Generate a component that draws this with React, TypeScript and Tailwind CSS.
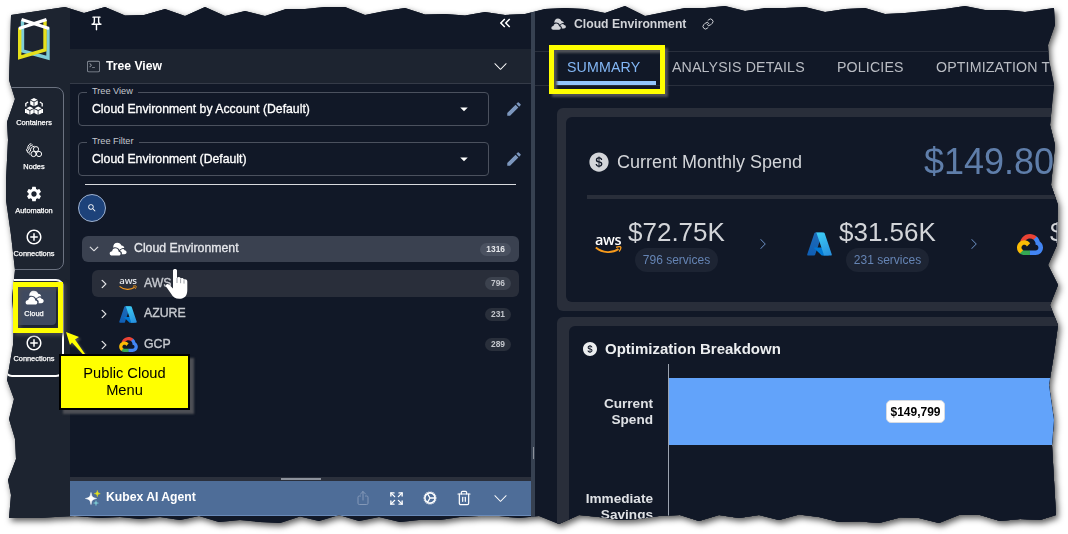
import React from 'react';
import { MdAddCircleOutline, MdArrowDropDown, MdEdit, MdKeyboardDoubleArrowLeft, MdOutlinePushPin, MdSearch, MdSettings } from 'react-icons/md';
import { BsChevronDown, BsChevronRight, BsTerminal } from 'react-icons/bs';
import { AiFillDollarCircle } from 'react-icons/ai';
import { IoShareOutline } from 'react-icons/io5';
import { HiOutlineCog } from 'react-icons/hi2';
import { Expand, Link, Trash2 } from 'lucide-react';

// Outline of the torn page edge, clockwise from the top left corner
const TORN_EDGE: [number, number][] = [
  [11, 15], [65, 7], [84, 13], [105, 7], [125, 15.5], [144, 15], [165, 9], [185, 16], [205, 7], [225, 16],
  [245, 11], [265, 16], [286, 9], [305, 9], [325, 7], [345, 7], [365, 15], [385, 11], [405, 8], [425, 14.5],
  [445, 14], [465, 15.5], [485, 12], [505, 15], [525, 14], [545, 9], [565, 8], [585, 9], [605, 13], [625, 6],
  [645, 16], [665, 12], [685, 8], [705, 8], [725, 6], [745, 11], [765, 8], [785, 8], [805, 7], [825, 12],
  [845, 9], [865, 8], [885, 14], [905, 13], [925, 11], [945, 9], [965, 6], [985, 10], [1005, 10], [1025, 12],
  [1054, 8], [1055, 25], [1048, 45], [1049, 60], [1054, 85], [1052, 105], [1050, 125], [1055, 145], [1051, 185],
  [1058, 205], [1057, 245], [1048, 265], [1058, 285], [1050, 305], [1058, 325], [1054, 354], [1049, 385],
  [1054, 420], [1052, 445], [1056, 515], [1040, 520], [1020, 519], [1000, 521], [980, 515], [959, 515],
  [939, 523], [919, 518], [900, 517.5], [879, 523], [860, 521.5], [839, 522], [819, 517], [799, 514.5],
  [779, 520], [759, 515], [739, 518], [719, 515], [699, 521], [680, 515], [659, 516], [639, 519], [619, 520],
  [599, 517], [579, 515], [559, 524], [539, 516], [519, 518], [499, 516], [479, 516], [460, 517], [440, 520],
  [419, 520], [400, 522], [379, 517], [359, 521], [339, 515], [319, 521], [300, 516.5], [280, 523], [260, 522],
  [240, 520], [219, 522], [199, 516], [180, 520], [160, 517], [140, 519], [120, 517], [100, 518], [75, 516],
  [55, 517], [40, 518], [9, 518], [11, 495], [8, 480], [16, 459], [15, 439], [9, 419], [14, 399], [7, 380],
  [13, 345], [14, 320], [12, 298], [15, 270], [11, 235], [6, 200], [6, 180], [8, 140], [7, 122], [15, 99],
  [9, 80], [10, 50],
];

const tornClip = `polygon(${TORN_EDGE.map(([x, y]) => `${x}px ${y}px`).join(', ')})`;

type IconProps = { className?: string };

function Logo() {
  return (
    <svg viewBox="0 0 34 44" className="h-[44px] w-[34px]" fill="none">
      <path d="M5.500 4V34L31 41V11" stroke="#7fcdd6" strokeWidth="3.400" />
      <path d="M28 4V33L2.700 40.500V11" stroke="#e6e01c" strokeWidth="3.400" />
      <path d="M4.500 2.500L32 11.500M29.500 2.500L2 11.500" stroke="#fff" strokeWidth="3.400" />
    </svg>
  );
}

function CloudsIcon({ className }: IconProps) {
  return (
    <svg viewBox="0 0 20 16" className={className} fill="currentColor">
      <path d="M4.500 6.500C4.300 3 6.300.8 9.300.8c2.300 0 4 1.300 4.600 3.200 1.900.1 3.100 1.200 3.300 2.900-1.600-.4-3 .1-3.900 1.100-.8.1-1.300.5-1.600 1C10.500 6.600 7.300 5.300 4.500 6.500z" />
      <path d="M14.300 14h2.900c1.600 0 2.600-1 2.600-2.300 0-1.300-.9-2.300-2.300-2.400-.7-1.500-2.700-2-4-.5-.4 0-.8.3-1 .8.2.3.300.6.4.9 1.400.6 2 2 1.400 3.500z" />
      <path d="M2.900 15.500h7.800c1.400 0 2.300-.9 2.300-2.200s-.9-2.100-2.200-2.200C10.500 8.500 8.900 7.200 7 7.200c-2 0-3.500 1.400-3.700 3.500-1.700 0-2.800 1.100-2.800 2.500 0 1.300 1 2.300 2.400 2.300z" />
    </svg>
  );
}

function Cube({ x, y }: { x: number; y: number }) {
  return (
    <g transform={`translate(${x} ${y})`} fill="currentColor">
      <path d="M4 0l3.500 1.800L4 3.600.5 1.800z" />
      <path d="M.2 2.600l3.400 1.700v4L.2 6.500zM7.800 2.600L4.400 4.300v4l3.400-1.800z" />
    </g>
  );
}

function ContainersIcon() {
  return (
    <svg viewBox="0 0 18 18" className="h-[18px] w-[18px]">
      <Cube x={5} y={0} />
      <Cube x={.9} y={8.500} />
      <Cube x={9.100} y={8.500} />
      <path d="M.8 8.500V5.500l2.400-1.500M17.200 8.500V5.500L14.800 4M.6 11v4M17.400 11v4" stroke="currentColor" strokeWidth="1.300" fill="none" />
    </svg>
  );
}

function NodesIcon() {
  return (
    <svg viewBox="0 0 17 15" className="h-[15px] w-[17px]" fill="none" stroke="currentColor" strokeWidth="1">
      <circle cx="10" cy="6.200" r="2.600" />
      <circle cx="7.500" cy="11" r="2.600" />
      <circle cx="13" cy="11" r="2.600" />
      <path d="M3.600 11.500C2.500 10 3 8.500 4.500 8 4.300 5.500 5.500 3.500 8.500 3.200M2.200 10C1 8.500 1.500 7 3 6.300 3 4 4 2.200 6.800 1.900M.9 8.300C.2 7 .6 5.800 1.800 5 1.800 2.700 3 .9 5.300.7" />
    </svg>
  );
}

function AwsIcon({ large }: { large?: boolean }) {
  return (
    <span className={large ? 'flex w-[27px] flex-col items-center text-white' : 'flex w-[18px] flex-col items-center text-gray-200'}>
      <span className={large ? 'font-["Open_Sans"] text-[14.500px] font-semibold leading-[12px] tracking-[-0.4px]' : 'font-["Open_Sans"] text-[9.600px] font-semibold leading-[8px] tracking-[-0.2px]'}>aws</span>
      <svg viewBox="0 0 27 8" className={large ? 'h-[8px] w-[27px]' : 'h-[6px] w-[18px]'} fill="none" stroke="#f79a1c">
        <path d="M.8 1.500C7.500 7.300 17.500 7.300 23.500 3" strokeWidth="1.800" />
        <path d="M21 1.300c2-.7 4.500-.8 4.800-.1.300.8-.5 2.800-1.700 4.300" strokeWidth="1.300" />
      </svg>
    </span>
  );
}

function AzureIcon({ className }: IconProps) {
  return (
    <svg viewBox="3 5 90 86" className={className}>
      <defs>
        <linearGradient id="azDark" x1="0.6" y1="0" x2="0.3" y2="1">
          <stop offset="0" stopColor="#1f6bb8" />
          <stop offset="1" stopColor="#0f5fb5" />
        </linearGradient>
        <linearGradient id="azLight" x1="0.3" y1="0" x2="0.7" y2="1">
          <stop offset="0" stopColor="#3ccbf4" />
          <stop offset="1" stopColor="#2892df" />
        </linearGradient>
      </defs>
      <path fill="url(#azDark)" d="M33.338 6.544h26.038l-27.030 80.087a4.152 4.152 0 0 1-3.933 2.824H8.149a4.145 4.145 0 0 1-3.928-5.470L29.404 9.368a4.152 4.152 0 0 1 3.934-2.825z" />
      <path fill="#0078d4" d="M71.175 60.261h-41.290a1.911 1.911 0 0 0-1.305 3.309l26.532 24.764a4.171 4.171 0 0 0 2.846 1.121h23.380z" />
      <path fill="url(#azLight)" d="M66.595 9.364a4.145 4.145 0 0 0-3.928-2.820H33.648a4.146 4.146 0 0 1 3.928 2.820l25.184 74.620a4.146 4.146 0 0 1-3.928 5.472h29.020a4.146 4.146 0 0 0 3.927-5.472z" />
    </svg>
  );
}

function GcpIcon({ className }: IconProps) {
  return (
    <svg viewBox="0 0 256 206" className={className}>
      <path fill="#ea4335" d="M170.250 56.820L192.500 34.570L193.990 25.200C153.440-11.680 88.980-7.500 52.420 33.920C42.270 45.420 34.730 59.760 30.720 74.570L38.690 73.450L83.190 66.110L86.630 62.600C106.420 40.850 139.900 37.930 162.760 56.430Z" />
      <path fill="#4285f4" d="M224.200 73.920C219.090 55.080 208.590 38.150 193.990 25.200L162.760 56.430C175.940 67.200 183.460 83.440 183.130 100.470V106.010C198.490 106.010 210.930 118.450 210.930 133.810C210.930 149.160 198.490 161.290 183.130 161.290H127.460L122 167.220V200.560L127.460 205.800H183.130C223.060 206.110 255.690 174.300 256 134.370C256.190 110.170 244.250 87.480 224.200 73.920" />
      <path fill="#34a853" d="M71.870 205.800H127.460V161.290H71.870C67.910 161.290 64.070 160.440 60.470 158.790L52.580 161.210L30.180 183.460L28.220 191.040C40.790 200.530 56.120 205.860 71.870 205.800" />
      <path fill="#fbbc05" d="M71.870 61.430C31.940 61.660-.24 94.230 0 134.160C.13 156.460 10.550 177.450 28.220 191.040L60.470 158.790C46.480 152.470 40.260 136.010 46.580 122.020C52.900 108.030 69.370 101.810 83.360 108.130C89.520 110.910 94.460 115.850 97.250 122.020L129.490 89.770C115.770 71.830 94.450 61.340 71.870 61.430" />
    </svg>
  );
}

function SparklesIcon() {
  return (
    <svg viewBox="0 0 16 16" className="h-[16px] w-[16px]">
      <path d="M6 2.500C6.500 6.500 7.500 7.700 11.500 8.500 7.500 9.300 6.500 10.500 6 14.500 5.500 10.500 4.500 9.300.5 8.500 4.500 7.700 5.500 6.500 6 2.500z" fill="#fff" stroke="#fff" strokeWidth=".6" />
      <path d="M12.300.5c.3 2 .8 2.600 2.900 3.100-2.100.4-2.600 1-2.900 3-.3-2-.8-2.600-2.900-3 2.100-.5 2.600-1.100 2.900-3.100z" fill="#e6e01c" stroke="#e6e01c" strokeWidth=".6" />
      <path d="M11 10.500c.3 1.700.7 2.200 2.600 2.600-1.900.4-2.300.9-2.600 2.600-.3-1.700-.7-2.200-2.600-2.600 1.900-.4 2.300-.9 2.600-2.600z" fill="#7fcdd6" stroke="#7fcdd6" strokeWidth=".4" />
    </svg>
  );
}

function SidebarItem({ icon, label, className }: { icon: React.ReactNode; label: string; className?: string }) {
  return (
    <div className={`flex flex-col items-center text-white ${className ?? ''}`}>
      <div className="flex h-[19px] items-center justify-center">{icon}</div>
      <span className="mt-[2px] text-[7.400px] leading-[10px] [-webkit-text-stroke:0.25px_white]">{label}</span>
    </div>
  );
}

function Sidebar() {
  return (
    <aside className="flex w-[70px] shrink-0 flex-col bg-[#1d2430] pt-[17px]">
      <div className="pl-[17px]">
        <Logo />
      </div>
      <div className="mt-[26px] ml-[4px] h-[183px] w-[60px] rounded-lg border border-[#6b7280] pt-[9px]">
        <SidebarItem icon={<ContainersIcon />} label="Containers" className="h-[44px]" />
        <SidebarItem icon={<NodesIcon />} label="Nodes" className="h-[43.500px]" />
        <SidebarItem icon={<MdSettings className="h-[18px] w-[18px]" />} label="Automation" className="h-[43px]" />
        <SidebarItem icon={<MdAddCircleOutline className="h-[18px] w-[18px]" />} label="Connections" />
      </div>
      <div className="mt-[9px] ml-[4px] h-[98px] w-[60px] rounded-lg border-2 border-white pt-[5px]">
        <div className="ml-[9px] h-[39px] w-[41px] rounded-[4px] bg-[#3f4a60] pt-[2px]">
          <SidebarItem icon={<CloudsIcon className="h-[15px] w-[19px]" />} label="Cloud" className="ml-[-3px]" />
        </div>
        <SidebarItem icon={<MdAddCircleOutline className="h-[18px] w-[18px]" />} label="Connections" className="mt-[8px]" />
      </div>
    </aside>
  );
}

function SelectField({ label, value }: { label: string; value: string }) {
  return (
    <div className="flex items-center">
      <div className="relative flex h-[34px] w-[411px] items-center justify-between rounded-[4px] border border-[#4b515e] pr-[15px] pl-[13px]">
        <span className="absolute top-[-8px] left-[8px] bg-[#111827] px-[5px] text-[9.200px] leading-[12px] text-[#c3c7ce]">{label}</span>
        <span className="text-[12.250px] text-white [-webkit-text-stroke:0.3px_white]">{value}</span>
        <MdArrowDropDown className="h-[18px] w-[18px] text-white" />
      </div>
      <MdEdit className="ml-[16px] h-[18px] w-[18px] text-[#7c96bd]" />
    </div>
  );
}

function CountBadge({ count, className }: { count: number; className: string }) {
  return (
    <span className={`flex h-[13px] items-center rounded-full px-[6px] text-[8.400px] font-bold ${className}`}>{count}</span>
  );
}

const providers = [
  { name: 'AWS', count: 796, icon: <AwsIcon />, row: 'bg-[#292e3a]', badge: 'bg-[#3c424e] text-[#c4c7cd]' },
  { name: 'AZURE', count: 231, icon: <AzureIcon className="mt-px h-[17px] w-[18px]" />, row: '', badge: 'bg-[#292f3b] text-[#c4c7cd]' },
  { name: 'GCP', count: 289, icon: <GcpIcon className="h-[15px] w-[19px]" />, row: '', badge: 'bg-[#292f3b] text-[#c4c7cd]' },
];

function TreePanel() {
  return (
    <section className="flex w-[461px] shrink-0 flex-col bg-[#111827]">
      <div className="flex h-[49px] items-center justify-between pr-[17px] pl-[18px] text-white">
        <MdOutlinePushPin className="mt-[-3px] h-[17px] w-[17px]" />
        <MdKeyboardDoubleArrowLeft className="mt-[-3px] h-[18px] w-[18px]" />
      </div>
      <div className="flex h-[35px] items-center border-b border-[#353b48] bg-[#1d2430] pr-[23px] pl-[17px]">
        <BsTerminal className="h-[13px] w-[13px] text-[#8f959f]" />
        <span className="ml-[6px] grow text-[12.200px] font-bold text-white">Tree View</span>
        <BsChevronDown className="h-[15px] w-[15px] text-white" />
      </div>
      <div className="flex flex-col gap-4 pt-2 pl-2">
        <SelectField label="Tree View" value="Cloud Environment by Account (Default)" />
        <SelectField label="Tree Filter" value="Cloud Environment (Default)" />
      </div>
      <div className="mt-[8px] mr-[15px] ml-[15px] h-px bg-[#d8dade]" />
      <div className="mt-[9px] ml-2 flex h-7 w-7 items-center justify-center rounded-full border border-[#9fb2d0] bg-[#1d427a]">
        <MdSearch className="h-[10px] w-[10px] text-white" />
      </div>
      <div className="mt-[14px] mr-[12px] ml-[12px] flex h-[26px] items-center rounded-md bg-[#3a4150] pr-[8px] pl-[7px]">
        <BsChevronDown className="h-[10px] w-[10px] text-white [stroke-width:0.8] stroke-current" />
        <CloudsIcon className="ml-[9px] h-[14px] w-[20px] text-white" />
        <span className="ml-[6px] grow pb-[3px] text-[12.300px] leading-[14px] text-[#e5e7eb] [-webkit-text-stroke:0.3px_#e5e7eb]">Cloud Environment</span>
        <CountBadge count={1316} className="bg-[#4a5160] text-[#e5e7eb]" />
      </div>
      <div className="mt-[8px] mr-[12px] ml-[22px] flex flex-col gap-[3.500px]">
        {providers.map(p => (
          <div key={p.name} className={`flex h-[27px] items-center rounded-md pr-[8px] pl-[7px] ${p.row}`}>
            <BsChevronRight className="h-[10px] w-[10px] text-white [stroke-width:0.8] stroke-current" />
            <span className="ml-[9px] flex w-[20px] justify-center">{p.icon}</span>
            <span className="ml-[6px] grow pb-[2px] text-[12.300px] leading-[14px] text-[#c6c9cf] [-webkit-text-stroke:0.35px_#c6c9cf]">{p.name}</span>
            <CountBadge count={p.count} className={p.badge} />
          </div>
        ))}
      </div>
      <div className="mt-[119px] flex h-[4px] justify-center bg-[#2b303c] pt-px">
        <div className="h-[2px] w-[40px] bg-[#8d929c]" />
      </div>
      <div className="flex h-[35px] items-center border-b border-[#6a8ab8] bg-[#4e6d98] pr-[23px] pl-[15px] text-white">
        <SparklesIcon />
        <span className="ml-[5px] grow pb-[2px] text-[12.200px] font-bold">Kubex AI Agent</span>
        <IoShareOutline className="mt-[-1px] h-[16px] w-[16px] text-[#8499b8]" />
        <Expand className="ml-[18px] h-[15px] w-[15px]" strokeWidth={2.2} />
        <HiOutlineCog className="ml-[18px] h-[16px] w-[16px] [stroke-width:2]" />
        <Trash2 className="ml-[18px] h-[16px] w-[16px]" strokeWidth={1.8} />
        <BsChevronDown className="ml-[21px] h-[15px] w-[15px]" />
      </div>
    </section>
  );
}

function SpendItem({ icon, amount, services }: { icon: React.ReactNode; amount: string; services?: string }) {
  return (
    <div className="flex h-[54px] shrink-0">
      <div className="mt-[13px] flex h-[26px] w-[28px] items-center justify-center">{icon}</div>
      <div className="ml-[6px] flex w-[97px] flex-col items-center">
        <span className="w-full text-[26px] leading-[28px] text-[#d3d5d9]">{amount}</span>
        {services && <span className="mt-[2px] flex h-[24px] items-center rounded-full bg-[#1d2433] px-[8px] text-[12px] whitespace-nowrap text-[#6584b4]">{services}</span>}
      </div>
    </div>
  );
}

function SpendCard() {
  return (
    <div className="h-[203px] w-[600px] rounded-md bg-[#292e3a] py-[9px] pl-[9px]">
      <div className="h-full rounded-l-md bg-[#111827] pt-[27px] pl-[21px]">
        <div className="flex h-[36px] items-center">
          <AiFillDollarCircle className="ml-[1px] h-[22px] w-[22px] text-[#d3d5d9]" />
          <span className="ml-[7px] w-[307px] text-[18px] text-[#d3d5d9]">Current Monthly Spend</span>
          <span className="text-[36px] text-[#5f7eaa]">$149.80</span>
        </div>
        <div className="mt-[15px] h-[4px] bg-[#292e3a]" />
        <div className="mt-[19px] ml-[7px] flex">
          <SpendItem icon={<AwsIcon large />} amount="$72.75K" services="796 services" />
          <BsChevronRight className="mt-[20px] mr-[36px] ml-[32px] h-[12px] w-[12px] shrink-0 text-[#6f93c8]" />
          <SpendItem icon={<AzureIcon className="h-[24px] w-[25px]" />} amount="$31.56K" services="231 services" />
          <BsChevronRight className="mt-[20px] mr-[36px] ml-[32px] h-[12px] w-[12px] shrink-0 text-[#6f93c8]" />
          <SpendItem icon={<GcpIcon className="h-[21px] w-[26px]" />} amount="$" />
        </div>
      </div>
    </div>
  );
}

function BreakdownCard() {
  return (
    <div className="mt-[6px] h-[240px] w-[600px] rounded-tl-md bg-[#292e3a] pt-[9px] pl-[12px]">
      <div className="flex h-full flex-col rounded-tl-md bg-[#111827]">
        <div className="flex h-[38px] items-center pt-[8px] pl-[13px]">
          <AiFillDollarCircle className="h-[16px] w-[16px] text-[#eceef0]" />
          <span className="ml-[7px] text-[15px] font-bold text-[#eceef0]">Optimization Breakdown</span>
        </div>
        <div className="flex grow">
          <div className="flex w-[99px] shrink-0 flex-col pt-[32px] pr-[15px] text-right text-[13.600px] leading-[16px] font-bold text-[#dfe1e5]">
            <span>Current<br />Spend</span>
            <span className="mt-[63px]">Immediate<br />Savings</span>
          </div>
          <div className="grow border-l border-[#9ca3af] pt-[14px]">
            <div className="flex h-[67px] items-center bg-[#62a3fa] pl-[217px]">
              <span className="flex h-[23px] w-[59px] items-center justify-center rounded-[5px] border border-[#d5dbe3] bg-white text-[12px] font-bold text-black">$149,799</span>
            </div>
          </div>
        </div>
      </div>
    </div>
  );
}

function DetailsPanel() {
  return (
    <main className="flex w-[533px] shrink-0 flex-col overflow-hidden bg-[#111827]">
      <div className="flex h-[51px] shrink-0 items-center pb-[3px] pl-[16px] text-[#d1d3d8]">
        <CloudsIcon className="h-[12px] w-[15px]" />
        <span className="ml-[8px] text-[12.200px] font-bold">Cloud Environment</span>
        <Link className="ml-[16px] h-[12px] w-[12px]" />
      </div>
      <nav className="flex h-[35px] shrink-0 items-center border-y border-[#292f3c] text-[14.200px] tracking-[0.150px] whitespace-nowrap text-[#b9bcc3]">
        <span className="ml-[19px] flex h-[33px] w-[102px] shrink-0 items-center border-b-4 border-[#93c5fd] pt-[3px] pl-[13px] text-[#83b7f5]">SUMMARY</span>
        <span className="ml-[16px] w-[165px] shrink-0 pb-[2px]">ANALYSIS DETAILS</span>
        <span className="w-[99px] shrink-0 pb-[2px]">POLICIES</span>
        <span className="pb-[2px]">OPTIMIZATION T</span>
      </nav>
      <div className="shrink-0 pt-[22px] pl-[22px]">
        <SpendCard />
        <BreakdownCard />
      </div>
    </main>
  );
}

function Annotations() {
  return (
    <>
      <div className="absolute top-[45px] left-[549px] h-[49px] w-[116px] border-[5px] border-[#ffff00] drop-shadow-[3px_3px_1px_#4d4f55]" />
      <div className="absolute top-[282px] left-[13px] h-[51px] w-[50px] border-[5px] border-[#ffff00] drop-shadow-[2px_2px_2px_#4d4f55]" />
      <svg viewBox="0 0 26 28" className="absolute top-[330px] left-[64px] h-[28px] w-[26px] drop-shadow-[2px_2px_1px_#4d4f55]">
        <path d="M2 2l13 5-4 2.500 10 14.500-1.500 1L8 12.500 6 15z" fill="#ffff00" />
      </svg>
      <div className="absolute top-[354px] left-[59px] flex h-[56px] w-[131px] justify-center border-2 border-black bg-[#ffff00] pt-[9px] text-center text-[14.670px] leading-[17px] text-black shadow-[4px_4px_2px_#4d4f55]">
        Public Cloud<br />Menu
      </div>
      <svg viewBox="0 0 24 32" className="absolute top-[268px] left-[165px] h-[32px] w-[24px]">
        <path d="M8 2.500C8 .5 12 .5 12 2.500V10c1.200-1.500 3.300-1 3.600.6 1-1.200 3-.6 3.300 1 1.200-.9 3.400-.3 3.400 1.800V22c0 6-3 8.800-8 8.800-4 0-6.300-1.600-8.200-5L1 18.500c-.8-2 1.600-3.300 3.200-1.700L8 20.500z" fill="#fff" />
        <path d="M12 10v5M15.600 11v4.200M19 12.200v3.400" stroke="#777b84" strokeWidth=".7" />
      </svg>
    </>
  );
}

export default function App() {
  return (
    <div className='relative h-[534px] w-[1068px] overflow-hidden bg-white font-["Liberation_Sans",Arial,sans-serif]'>
      <div className="drop-shadow-[2px_3px_3px_rgba(0,0,0,0.65)]">
        <div className="flex h-[534px] w-[1068px] bg-[#111827]" style={{ clipPath: tornClip }}>
          <Sidebar />
          <TreePanel />
          <div className="flex w-[4px] shrink-0 items-end justify-end bg-[#374151] pb-[75px]">
            <div className="mr-[1px] h-[12px] w-px bg-[#8d929c]" />
          </div>
          <DetailsPanel />
        </div>
      </div>
      <Annotations />
    </div>
  );
}
